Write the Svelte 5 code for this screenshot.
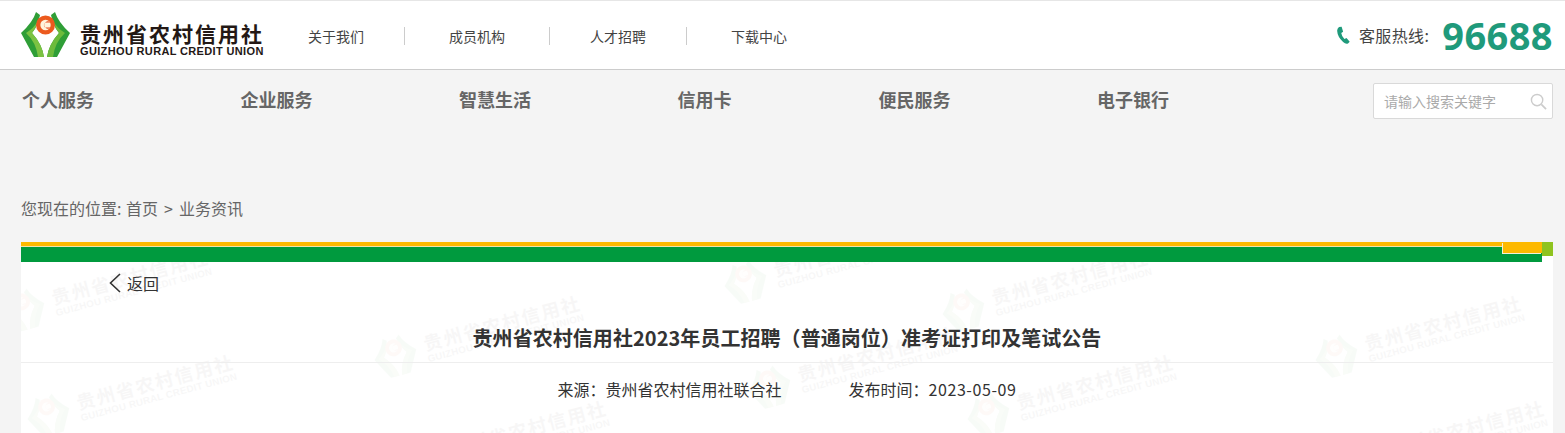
<script lang="ts">
  const topLinks = ['关于我们', '成员机构', '人才招聘', '下载中心'];
  const navItems = ['个人服务', '企业服务', '智慧生活', '信用卡', '便民服务', '电子银行'];
  // faint rotated logos behind the article, page coords of each mark's left middle
  const marks = [
    { x: 3, y: 316 },
    { x: 375, y: 362 },
    { x: 725, y: 288 },
    { x: 943, y: 316 },
    { x: 1316, y: 362 },
    { x: 749, y: 393 },
    { x: 28, y: 421 },
    { x: 968, y: 421 },
    { x: 401, y: 467 },
    { x: 1339, y: 467 }
  ];
</script>

{#snippet logoMark()}
  <svg class="mark" viewBox="0 0 49 46" aria-hidden="true">
    <path d="M15 0 Q12 10 0 21 L13 45 L23 45 Q21 32 11 21 Q17 14 19 3Z" fill="#2f9e37" />
    <path d="M5 21 Q15 30 17 45 L23 45 Q21 32 11 21 Q15 16 17 9 Q13 16 5 21Z" fill="#7cc242" />
    <path d="M34 0 Q37 10 49 21 L36 45 L26 45 Q28 32 38 21 Q32 14 30 3Z" fill="#2f9e37" />
    <path d="M44 21 Q34 30 32 45 L26 45 Q28 32 38 21 Q34 16 32 9 Q36 16 44 21Z" fill="#6dbb3c" />
    <circle cx="24.5" cy="13" r="9.5" fill="#ec5a1e" />
    <circle cx="24.5" cy="13" r="5.2" fill="#fff3dc" />
    <path d="M29.4 10.4 A3.6 3.6 0 1 0 29.4 15.6 L25.5 15.6 A2.6 2.6 0 1 1 25.5 10.4Z" fill="#e8491d" />
  </svg>
{/snippet}

<div class="page">
  <header class="top">
    <div class="logo">
      {@render logoMark()}
      <div class="logo-text">
        <span class="cn">贵州省农村信用社</span>
        <span class="en">GUIZHOU RURAL CREDIT UNION</span>
      </div>
    </div>
    <nav class="top-links">
      {#each topLinks as link}
        <a href="#top">{link}</a>
      {/each}
    </nav>
    <div class="hotline">
      <svg class="phone" viewBox="0 0 16 20" aria-hidden="true">
        <path d="M3.2 1 L6 .6 L7.6 6 L5.6 7.4 Q6 11 9 13.6 L11.2 12.6 L14.6 16.6 L12.8 18.4 Q10.4 19.4 7.6 17 Q1.6 11.6 1.2 5 Q1.2 2.6 3.2 1Z" fill="#1f9a7b" />
      </svg>
      <span class="hot-label">客服热线:</span>
      <span class="hot-num">96688</span>
    </div>
  </header>

  <div class="band">
    <nav class="main-nav">
      {#each navItems as item}
        <a href="#top">{item}</a>
      {/each}
    </nav>
    <div class="search">
      <span>请输入搜索关键字</span>
      <svg viewBox="0 0 18 18" aria-hidden="true">
        <circle cx="7.5" cy="7.5" r="6" fill="none" stroke="#ccc" stroke-width="1.5" />
        <path d="M12 12 L17 17" stroke="#ccc" stroke-width="1.8" />
      </svg>
    </div>
  </div>

  <div class="crumbs">
    您现在的位置: <a class="home" href="#top">首页</a><span class="gt">&gt;</span><a href="#top">业务资讯</a>
  </div>

  <main class="article">
    <div class="ribbon">
      <div class="stripe-y"></div>
      <div class="stripe-g"></div>
      <div class="tab-y"></div>
      <div class="tab-lime"></div>
    </div>
    <div class="body">
      {#each marks as m}
        <div class="watermark" style="left:{m.x - 21}px;top:{m.y - 285}px">
          {@render logoMark()}
          <div class="logo-text">
            <span class="cn">贵州省农村信用社</span>
            <span class="en">GUIZHOU RURAL CREDIT UNION</span>
          </div>
        </div>
      {/each}
      <a class="back" href="#top">
        <svg viewBox="0 0 14 22" aria-hidden="true"><path d="M12 2 L2.5 11 L12 20" fill="none" stroke="#333" stroke-width="1.6" /></svg>
        返回
      </a>
      <h1>贵州省农村信用社2023年员工招聘（普通岗位）准考证打印及笔试公告</h1>
      <div class="meta">
        <span>来源：贵州省农村信用社联合社</span>
        <span>发布时间：<span class="date">2023-05-09</span></span>
      </div>
    </div>
  </main>
</div>

<style>
  :global(body) {
    margin: 0;
    background: #f4f4f4;
    overflow: hidden;
  }
  .page {
    height: 433px;
    overflow: hidden;
    font-family: "Noto Sans CJK SC", "Liberation Sans", sans-serif;
    color: #333;
  }
  a {
    color: inherit;
    text-decoration: none;
  }
  .top {
    height: 68px;
    background: #fff;
    border-top: 1px solid #e6e6e6;
    border-bottom: 1px solid #ccc;
    display: flex;
    align-items: center;
    padding: 0 12px 0 21px;
  }
  .logo {
    width: 243px;
    display: flex;
    align-items: center;
    gap: 10px;
    flex: none;
  }
  .mark {
    width: 49px;
    height: 46px;
    flex: none;
  }
  .logo-text {
    display: flex;
    flex-direction: column;
    color: #231815;
  }
  .logo > .logo-text {
    margin-top: 8px;
  }
  .cn {
    font-size: 21px;
    line-height: 24px;
    font-weight: 700;
    letter-spacing: 2px;
    white-space: nowrap;
  }
  .en {
    font-family: "Liberation Sans", sans-serif;
    font-size: 11px;
    line-height: 12px;
    font-weight: 700;
    letter-spacing: 0.35px;
    white-space: nowrap;
  }
  .top-links {
    margin-left: 44px;
    display: flex;
    font-size: 14px;
    color: #444;
  }
  .top-links a {
    padding: 0 40px 0 0;
    margin-right: 44px;
    line-height: 18px;
    border-right: 1px solid #ccc;
    position: relative;
    top: 1px;
  }
  .top-links a:nth-child(2) {
    padding-right: 44px;
    margin-right: 40px;
  }
  .top-links a:last-child {
    border-right: 0;
  }
  .hotline {
    margin-left: auto;
    display: flex;
    align-items: center;
  }
  .phone {
    width: 15px;
    height: 19px;
    margin-right: 8px;
  }
  .hot-label {
    font-size: 16px;
    letter-spacing: 0.4px;
    color: #444;
    margin-right: 13px;
  }
  .hot-num {
    font-family: "Open Sans", sans-serif;
    font-size: 38px;
    line-height: 40px;
    font-weight: 700;
    color: #1f9a7b;
    letter-spacing: 0.4px;
  }
  .band {
    height: 104px;
    display: flex;
    padding: 0 12px 0 21px;
    justify-content: space-between;
    align-items: flex-start;
  }
  .main-nav {
    display: flex;
    padding: 16px 0 0 1px;
    font-size: 18px;
    font-weight: 700;
    line-height: 26px;
    color: #666;
  }
  .main-nav a {
    width: 218.5px;
  }
  .main-nav a:nth-child(4) {
    width: 201px;
  }
  .search {
    width: 180px;
    height: 36px;
    margin-top: 13px;
    background: #fff;
    border: 1px solid #d9d9d9;
    border-radius: 2px;
    display: flex;
    align-items: center;
    justify-content: space-between;
    padding: 0 5px 0 10px;
    box-sizing: border-box;
    font-size: 14px;
    color: #aaa;
  }
  .search svg {
    width: 17px;
    height: 17px;
  }
  .crumbs {
    height: 68px;
    padding-left: 21px;
    font-size: 16px;
    line-height: 24px;
    color: #666;
    padding-top: 22px;
    box-sizing: border-box;
  }
  .home {
    margin-left: 1px;
  }
  .gt {
    margin: 0 6px;
  }
  .article {
    margin: 0 12px 0 21px;
    background: #fff;
  }
  .ribbon {
    position: relative;
    height: 20px;
    background: #fff;
  }
  .stripe-y {
    height: 4px;
    background: #fdb900;
    border-bottom: 1px solid #f3e3a8;
    box-sizing: content-box;
  }
  .stripe-g {
    height: 15px;
    background: #009a3e;
    margin-right: 11px;
  }
  .tab-y {
    position: absolute;
    right: 11px;
    top: 0;
    width: 39px;
    height: 11px;
    background: #fdb900;
    box-shadow: -1px 1px 0 #f3f0d8;
  }
  .tab-lime {
    position: absolute;
    right: 0;
    top: 0;
    width: 11px;
    height: 14px;
    background: #8fc31f;
  }
  .body {
    position: relative;
    height: 171px;
    overflow: hidden;
  }
  .watermark {
    position: absolute;
    width: 243px;
    display: flex;
    align-items: center;
    gap: 10px;
    opacity: 0.03;
    transform: rotate(-15deg) scale(0.88);
    transform-origin: 0 50%;
    pointer-events: none;
  }
  .back {
    position: relative;
    display: inline-flex;
    align-items: center;
    gap: 5px;
    margin: 10px 0 0 87px;
    font-size: 16px;
    line-height: 22px;
  }
  .back svg {
    width: 14px;
    height: 22px;
  }
  h1 {
    position: relative;
    margin: 0;
    padding: 25px 0 10px;
    text-align: center;
    font-size: 20px;
    line-height: 28px;
    font-weight: 700;
    letter-spacing: 0.05px;
    color: #333;
    border-bottom: 1px solid #eee;
  }
  .meta {
    position: relative;
    margin-top: 14px;
    display: flex;
    justify-content: center;
    gap: 67px;
    font-size: 16px;
    line-height: 24px;
  }
  .date {
    letter-spacing: 0.6px;
  }
</style>
